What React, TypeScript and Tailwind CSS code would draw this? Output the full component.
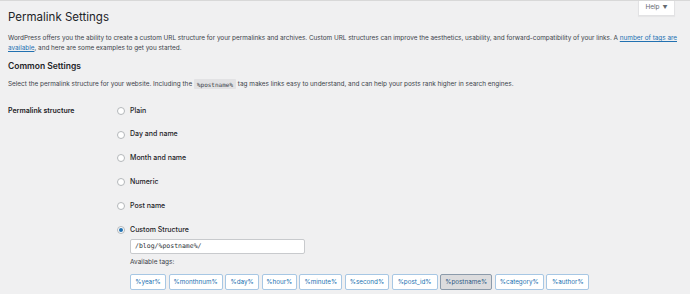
import React from "react";

const options = ["Plain", "Day and name", "Month and name", "Numeric", "Post name"];
const tags = [
  { t: "%year%", w: "w-[36px]" },
  { t: "%monthnum%", w: "w-[54px]" },
  { t: "%day%", w: "w-[34px]" },
  { t: "%hour%", w: "w-[35px]" },
  { t: "%minute%", w: "w-[43px]" },
  { t: "%second%", w: "w-[44px]" },
  { t: "%post_id%", w: "w-[46px]" },
  { t: "%postname%", w: "w-[52px]" },
  { t: "%category%", w: "w-[49px]" },
  { t: "%author%", w: "w-[43px]" },
];

function Radio({ checked }: { checked?: boolean }) {
  return (
    <span className="flex h-[8px] w-[8px] shrink-0 items-center justify-center rounded-full border border-[#b4b7ba] bg-white">
      {checked ? <span className="h-[4px] w-[4px] rounded-full bg-[#2271b1]" /> : null}
    </span>
  );
}

export default function App() {
  return (
    <div className="min-h-[294px] w-[690px] border-t border-[#d8d8d8] bg-[#f0f0f1] px-[8px] font-['Inter','Noto_Sans',sans-serif] text-[#3c434a]">
      <div className="flex items-start justify-between">
        <h1 className="mt-[9px] text-[11.5px] leading-[15px] font-normal text-[#1d2327]">Permalink Settings</h1>
        <div className="mr-[7px] flex h-[15px] w-[37px] items-center justify-center gap-[3px] border-x border-b border-[#e2e2e4] bg-white text-[6.5px] text-[#646970] shadow-[0_1px_1px_rgba(0,0,0,0.04)]">
          <span>Help</span>
          <span className="text-[5px]">▼</span>
        </div>
      </div>
      <p className="mt-[8px] text-[6.4px] leading-[10px] tracking-[-0.01px]">
        WordPress offers you the ability to create a custom URL structure for your permalinks and archives. Custom URL
        structures can improve the aesthetics, usability, and forward-compatibility of your links. A{" "}
        <span className="text-[#2271b1] underline">number of tags are available</span>, and here are some examples to get
        you started.
      </p>
      <h2 className="mt-[7.5px] text-[8.5px] leading-[11px] font-semibold text-[#1d2327]">Common Settings</h2>
      <p className="mt-[7.5px] text-[6.4px] leading-[10px]">
        Select the permalink structure for your website. Including the{" "}
        <code className="rounded-[1px] bg-[#e2e2e4] px-[3px] py-[1.5px] font-['DejaVu_Sans_Mono',monospace] text-[6px] text-[#3c434a]">
          %postname%
        </code>{" "}
        tag makes links easy to understand, and can help your posts rank higher in search engines.
      </p>
      <div className="mt-[10px] flex">
        <div className="w-[109px] shrink-0 pt-[7px] text-[7px] leading-[10px] font-semibold text-[#1d2327]">
          Permalink structure
        </div>
        <div className="flex flex-col">
          {options.map((o) => (
            <div key={o} className="flex h-[23.8px] items-center gap-[5px]">
              <Radio />
              <span className="text-[7px] font-medium text-[#1d2327]">{o}</span>
            </div>
          ))}
          <div className="mt-[7px] flex h-[10px] items-center gap-[5px]">
            <Radio checked />
            <span className="text-[7px] font-medium text-[#1d2327]">Custom Structure</span>
          </div>
          <div className="ml-[13px] mt-[4px] flex flex-col items-start">
            <div className="flex h-[15px] w-[175px] items-center rounded-[2px] border border-[#c8cacd] bg-white px-[4px] font-['DejaVu_Sans_Mono',monospace] text-[6.5px] text-[#2c3338]">
              /blog/%postname%/
            </div>
            <div className="mt-[4.5px] text-[6.5px] leading-[9.75px]">Available tags:</div>
            <div className="mt-[6px] flex gap-[2.6px]">
              {tags.map(({ t, w }) => (
                <span
                  key={t}
                  className={
                    t === "%postname%"
                      ? `flex h-[16px] ${w} items-center justify-center rounded-[2px] border border-[#8c9bab] bg-[#dcdcde] text-[6.3px] text-[#2c5a85]`
                      : `flex h-[16px] ${w} items-center justify-center rounded-[2px] border border-[#a7c7e4] bg-white text-[6.3px] text-[#2271b1]`
                  }
                >
                  {t}
                </span>
              ))}
            </div>
          </div>
        </div>
      </div>
    </div>
  );
}
